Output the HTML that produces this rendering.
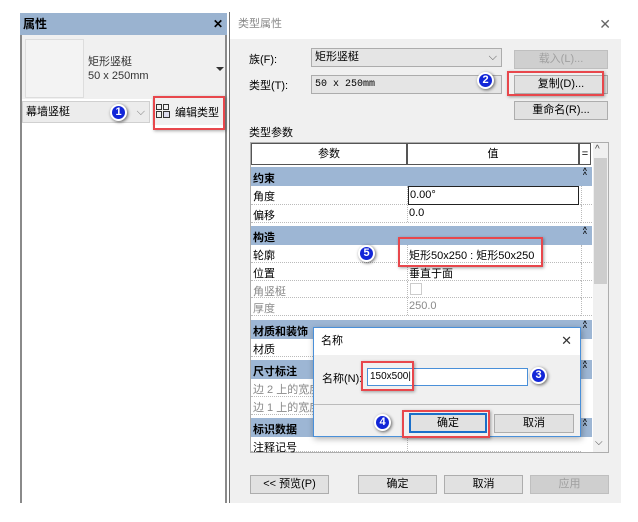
<!DOCTYPE html>
<html><head><meta charset="utf-8"><style>
*{box-sizing:border-box;margin:0;padding:0}
body{width:638px;height:522px;background:#fff;position:relative;overflow:hidden;font-family:"Liberation Sans","Noto Sans CJK SC",sans-serif;font-size:11px;color:#000}
.a{position:absolute}
.btn{position:absolute;background:#e1e1e1;border:1px solid #adadad;text-align:center;font-size:11px;line-height:17px}
.dis{color:#a0a0a0;background:#cfcfcf;border-color:#bfbfbf}
.red{position:absolute;border:2px solid #e8474c;box-shadow:1px 1px 3px rgba(0,0,0,.35)}
.num{position:absolute;width:17px;height:17px;border-radius:50%;background:#1226d8;border:2px solid #fff;box-shadow:1px 1px 3px rgba(0,0,0,.6);color:#fff;font-weight:bold;font-size:11px;text-align:center;line-height:13px}
.row{position:absolute;left:251px;width:330px;border-bottom:1px dotted #bbb;background:#fff;font-size:11px}
.row span{position:absolute;left:2px;top:2px}
.row i{position:absolute;left:158px;top:2px;font-style:normal}
.row:after{content:"";position:absolute;left:156px;top:0;bottom:0;border-left:1px dotted #bbb}
.g{position:absolute;left:251px;width:341px;background:#9db6d4;font-weight:bold;font-size:11px}
.g span{position:absolute;left:2px;top:3px}
.g b{position:absolute;right:5px;top:3px;font-size:7px;line-height:4px}
.ec{position:absolute;left:581px;width:11px;background:#fff;border-left:1px dotted #bbb;border-bottom:1px dotted #bbb}
.gray{color:#8a8a8a}
</style></head><body>
<div class="a" style="left:20px;top:13px;width:207px;height:490px;background:#fff;border-left:2px solid #8a8a8a;border-right:2px solid #8a8a8a"></div>
<div class="a" style="left:20px;top:13px;width:207px;height:22px;background:#9ab3d0;font-weight:bold;font-size:12px;line-height:22px;padding-left:3px">属性<span style="position:absolute;right:4px;font-size:12px">✕</span></div>
<div class="a" style="left:22px;top:35px;width:203px;height:64px;background:#f0f0f0"></div>
<div class="a" style="left:25px;top:39px;width:59px;height:59px;background:#f3f3f3;border:1px solid #ddd"></div>
<div class="a" style="left:88px;top:55px;font-size:11px;color:#333;line-height:14px">矩形竖梃<br>50 x 250mm</div>
<div class="a" style="left:216px;top:67px;border-left:4px solid transparent;border-right:4px solid transparent;border-top:4px solid #333"></div>
<div class="a" style="left:22px;top:101px;width:128px;height:22px;background:#ececec;border:1px solid #d0d0d0;font-size:11px;line-height:20px;padding-left:3px">幕墙竖梃<span style="position:absolute;right:4px;color:#777">⌵</span></div>
<div class="num" style="left:110px;top:104px">1</div>
<div class="a" style="left:152px;top:99px;width:73px;height:26px;background:#f0f0f0"></div>
<svg class="a" style="left:156px;top:104px" width="14" height="14"><rect x="0.5" y="0.5" width="5" height="5" fill="none" stroke="#333"/><rect x="0.5" y="7.5" width="5" height="6" fill="none" stroke="#333"/><rect x="7.5" y="0.5" width="5" height="5" fill="none" stroke="#333"/><rect x="7.5" y="7.5" width="6" height="6" fill="#dde" stroke="#333"/></svg>
<div class="a" style="left:175px;top:104px;font-size:11px">编辑类型</div>
<div class="red" style="left:153px;top:96px;width:72px;height:34px"></div>

<div class="a" style="left:229px;top:12px;width:392px;height:491px;background:#f0f0f0;border-left:1px solid #707070"></div>
<div class="a" style="left:230px;top:12px;width:391px;height:27px;background:#fff;font-size:11px;color:#888;line-height:24px;padding-left:8px">类型属性<span style="position:absolute;right:10px;top:0;font-size:14px;color:#666">✕</span></div>
<div class="a" style="left:249px;top:51px">族(F):</div>
<div class="a" style="left:311px;top:48px;width:191px;height:19px;background:#e5e5e5;border:1px solid #acacac;line-height:17px;padding-left:3px">矩形竖梃<span style="position:absolute;right:4px;color:#555">⌵</span></div>
<div class="btn dis" style="left:514px;top:50px;width:94px;height:19px">载入(L)...</div>
<div class="a" style="left:249px;top:77px">类型(T):</div>
<div class="a" style="left:311px;top:75px;width:191px;height:19px;background:#e5e5e5;border:1px solid #acacac;line-height:17px;padding-left:3px;font-family:'Liberation Mono',monospace;font-size:10px">50 x 250mm</div>
<div class="num" style="left:477px;top:72px">2</div>
<div class="btn" style="left:514px;top:75px;width:94px;height:19px">复制(D)...</div>
<div class="red" style="left:507px;top:71px;width:97px;height:25px"></div>
<div class="btn" style="left:514px;top:101px;width:94px;height:19px">重命名(R)...</div>
<div class="a" style="left:249px;top:124px">类型参数</div>
<div class="a" style="left:250px;top:142px;width:359px;height:311px;background:#fff;border:1px solid #adadad"></div>
<div class="a" style="left:251px;top:143px;width:156px;height:22px;border:1px solid #555;text-align:center;line-height:20px">参数</div>
<div class="a" style="left:407px;top:143px;width:172px;height:22px;border:1px solid #555;text-align:center;line-height:20px">值</div>
<div class="a" style="left:579px;top:143px;width:12px;height:22px;border:1px solid #555;text-align:center;line-height:20px">=</div>
<div class="a" style="left:593px;top:143px;width:15px;height:309px;background:#f0f0f0"></div>
<div class="a" style="left:595px;top:144px;font-size:10px;color:#444">^</div>
<div class="a" style="left:594px;top:158px;width:13px;height:126px;background:#cdcdcd"></div>
<div class="a" style="left:595px;top:437px;font-size:10px;color:#444">⌵</div>

<div class="g" style="top:167px;height:19px"><span>约束</span><b>^<br>^</b></div>
<div class="row" style="top:186px;height:19px"><span>角度</span></div>
<div class="a" style="left:408px;top:186px;width:171px;height:19px;border:1px solid #222;background:#fff;padding:2px 1px">0.00°</div>
<div class="row" style="top:205px;height:18px"><span>偏移</span><i>0.0</i></div>
<div class="g" style="top:226px;height:19px"><span>构造</span><b>^<br>^</b></div>
<div class="row" style="top:245px;height:18px"><span>轮廓</span><i>矩形50x250 : 矩形50x250</i></div>
<div class="row" style="top:263px;height:18px"><span>位置</span><i>垂直于面</i></div>
<div class="row" style="top:281px;height:17px"><span class="gray">角竖梃</span></div>
<div class="a" style="left:410px;top:283px;width:12px;height:12px;border:1px solid #ccc"></div>
<div class="row" style="top:298px;height:18px"><span class="gray">厚度</span><i class="gray">250.0</i></div>
<div class="g" style="top:320px;height:19px"><span>材质和装饰</span><b>^<br>^</b></div>
<div class="row" style="top:339px;height:18px"><span>材质</span></div>
<div class="g" style="top:360px;height:19px"><span>尺寸标注</span><b>^<br>^</b></div>
<div class="row" style="top:379px;height:18px"><span class="gray">边 2 上的宽度</span></div>
<div class="row" style="top:397px;height:18px"><span class="gray">边 1 上的宽度</span></div>
<div class="g" style="top:418px;height:19px"><span>标识数据</span><b>^<br>^</b></div>
<div class="row" style="top:437px;height:15px"><span>注释记号</span></div>
<div class="ec" style="top:186px;height:19px"></div><div class="ec" style="top:205px;height:18px"></div>
<div class="ec" style="top:245px;height:18px"></div><div class="ec" style="top:263px;height:18px"></div>
<div class="ec" style="top:281px;height:17px"></div><div class="ec" style="top:298px;height:18px"></div>

<div class="num" style="left:358px;top:245px">5</div>
<div class="red" style="left:398px;top:237px;width:145px;height:30px"></div>

<div class="btn" style="left:250px;top:475px;width:79px;height:19px">&lt;&lt; 预览(P)</div>
<div class="btn" style="left:358px;top:475px;width:79px;height:19px">确定</div>
<div class="btn" style="left:444px;top:475px;width:79px;height:19px">取消</div>
<div class="btn dis" style="left:530px;top:475px;width:79px;height:19px">应用</div>

<div class="a" style="left:313px;top:327px;width:268px;height:110px;background:#f0f0f0;border:1px solid #4a90d9;box-shadow:1px 2px 6px rgba(0,0,0,.3)"></div>
<div class="a" style="left:314px;top:328px;width:266px;height:27px;background:#fff;padding-left:7px;line-height:26px">名称<span style="position:absolute;right:8px;top:0;font-size:13px;color:#333">✕</span></div>
<div class="a" style="left:322px;top:370px">名称(N):</div>
<div class="a" style="left:367px;top:368px;width:161px;height:18px;background:#fff;border:1px solid #4a90d9;padding-left:2px;line-height:16px;font-size:10px">150x500|</div>
<div class="red" style="left:361px;top:361px;width:53px;height:30px"></div>
<div class="num" style="left:530px;top:367px">3</div>
<div class="a" style="left:314px;top:404px;width:266px;border-top:1px solid #bbb"></div>
<div class="num" style="left:374px;top:414px">4</div>
<div class="btn" style="left:409px;top:413px;width:78px;height:20px;border:2px solid #1a6fc9">确定</div>
<div class="btn" style="left:494px;top:414px;width:80px;height:19px">取消</div>
<div class="red" style="left:402px;top:410px;width:88px;height:28px"></div>
</body></html>
